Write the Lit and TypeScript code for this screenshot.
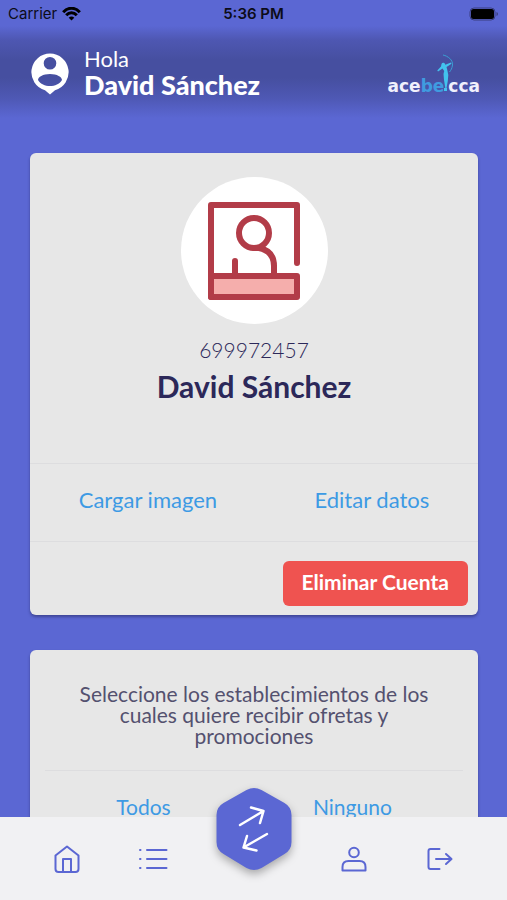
import { LitElement, html, css } from "lit";
import { customElement } from "lit/decorators.js";

@customElement("status-bar")
class StatusBar extends LitElement {
  static styles = css`
    :host {
      display: grid;
      grid-template-columns: 1fr auto 1fr;
      align-items: center;
      height: 28px;
      padding: 0 8px;
      color: #0c0c18;
      font: 15px/20px Inter, "Liberation Sans", sans-serif;
    }
    .carrier {
      display: flex;
      align-items: center;
      gap: 5px;
    }
    .time {
      font-weight: 600;
    }
    .battery {
      justify-self: end;
    }
    svg {
      display: block;
    }
  `;
  render() {
    return html`
      <div class="carrier">
        <span>Carrier</span>
        <svg width="19" height="14" viewBox="0 0 19 14" fill="none" stroke="#000" stroke-width="3">
          <path d="M1.2 5.2C6-.1 13-.1 17.8 5.2" />
          <path d="M4.2 8.3C7.3 5 11.7 5 14.8 8.3" />
          <path d="M9.5 13.6L6.7 10.7C8.3 9.2 10.7 9.2 12.3 10.7Z" fill="#000" stroke="none" />
        </svg>
      </div>
      <span class="time">5:36 PM</span>
      <svg class="battery" width="30" height="15" viewBox="0 0 30 15">
        <rect x="1" y="1" width="25" height="12" rx="4" fill="none" stroke="#3a3f80" />
        <rect x="2" y="2" width="23" height="10" rx="2.500" fill="#000" />
        <path d="M27.500 5v4c2-.8 2-3.200 0-4z" fill="#3a3f80" />
      </svg>
    `;
  }
}

@customElement("app-root")
class AppRoot extends LitElement {
  static styles = css`
    :host {
      display: flex;
      flex-direction: column;
      height: 100vh;
      overflow: hidden;
      background: #5b67d3;
      color: #2c2859;
      font-family: Lato, "Open Sans", sans-serif;
    }
    * {
      box-sizing: border-box;
    }
    svg {
      display: block;
    }
    h1,
    p {
      margin: 0;
    }
    button {
      border: 0;
      padding: 0;
      background: none;
      font: inherit;
      color: inherit;
      cursor: pointer;
    }
    .top {
      flex: none;
      background: linear-gradient(#5b67d3 26px, #4e57b2 40px, #464fa0 60px, #464fa0 78px, #4e58b4 98px, #5b67d3 118px);
    }
    .header {
      display: flex;
      align-items: center;
      height: 92px;
      padding: 0 27px 0 30px;
      color: #fff;
    }
    .greeting {
      display: flex;
      flex-direction: column;
      margin-left: 14px;
      padding-bottom: 3px;
      font-size: 22px;
      line-height: 24px;
    }
    .greeting strong {
      font-weight: 900;
      font-size: 27px;
      line-height: 27px;
    }
    .logo {
      display: flex;
      align-items: flex-end;
      margin-left: auto;
      font: bold 17px/18px "DejaVu Sans", sans-serif;
      color: #f0f0fc;
    }
    .logo .be {
      color: #3f9be0;
    }
    .archer {
      margin: 0 -10px 3px -8px;
    }
    .content {
      flex: 1;
      min-height: 0;
      overflow: hidden;
      display: flex;
      flex-direction: column;
      gap: 35px;
      padding: 33px 29px 0 30px;
    }
    .card {
      flex: none;
      border-radius: 6px;
      background: #e7e7e7;
      box-shadow: 0 2px 3px rgba(20, 20, 60, 0.4);
    }
    .profile {
      display: flex;
      flex-direction: column;
      align-items: center;
      height: 310px;
      padding-top: 24px;
    }
    .avatar {
      display: grid;
      place-items: center;
      width: 147px;
      height: 147px;
      border-radius: 50%;
      background: #fff;
    }
    .phone {
      margin-top: 14px;
      font-size: 21px;
      line-height: 24px;
      font-weight: 300;
    }
    .name {
      margin-top: 6px;
      font-size: 30px;
      line-height: 36px;
      font-weight: 700;
    }
    .actions {
      display: flex;
      justify-content: space-around;
      height: 78px;
      padding-bottom: 6px;
      border-top: 1px solid #dddddf;
      color: #3d9ae4;
      font-size: 22px;
      line-height: 24px;
    }
    .danger-row {
      display: flex;
      justify-content: flex-end;
      padding: 19px 10px 9px;
      border-top: 1px solid #dddddf;
    }
    .danger {
      height: 45px;
      padding: 0 19px 4px;
      border-radius: 6px;
      background: #ef5350;
      color: #fff;
      font-size: 21px;
      font-weight: 700;
    }
    .prompt {
      padding: 33px 48px 24px;
      text-align: center;
      font-size: 21px;
      line-height: 21px;
      color: #54516f;
    }
    .picks {
      margin: 0 15px;
      font-size: 21px;
    }
    .tabs {
      flex: none;
      display: grid;
      grid-template-columns: 1fr 1fr 116px 1fr 1fr;
      height: 83px;
      padding: 0 24px;
      background: #f1f1f3;
      color: #5b67d3;
    }
    .tabs button {
      display: grid;
      place-items: center;
    }
    .tabs .swap {
      position: relative;
      justify-self: center;
      align-self: start;
      margin-top: -30px;
      filter: drop-shadow(0 4px 4px rgba(0, 0, 0, 0.3));
    }
    .line {
      fill: none;
      stroke: currentColor;
      stroke-width: 2;
      stroke-linecap: round;
      stroke-linejoin: round;
    }
  `;

  render() {
    return html`
      <header class="top">
        <status-bar></status-bar>
        <div class="header">
          <svg width="40" height="44" viewBox="0 0 40 44">
            <path
              fill="#fff"
              fill-rule="evenodd"
              d="M20 1.500a18.700 18.700 0 0 1 5 36.700L20 42.500L15 38.200A18.700 18.700 0 0 1 20 1.500zM20 5a6.300 6.300 0 1 0 0 12.600A6.300 6.300 0 0 0 20 5zM20 22C13 22 8 25 8 28C10.500 32 15 34 20 34S29.500 32 32 28C32 25 27 22 20 22z"
            />
          </svg>
          <div class="greeting"><span>Hola</span><strong>David Sánchez</strong></div>
          <div class="logo">
            <span>ace</span><span class="be">be</span>
            <svg class="archer" width="22" height="38" viewBox="0 0 22 38">
              <path d="M5.500 10a2 2.200 0 0 1 3.800.8l5.700-2.300.5 1.200-5 3.300 1 4 .8 4-.5 6-1.300 7h-1.200L8 26l-.5-6 .7-3-1.700-2.500L2 17.500l-.7-1L5 12.500z" fill="#42c3ee" />
              <path d="M7 1c5 1 10 5 9.500 10-.5 3.500-1.500 5-3 7" fill="none" stroke="#3b9fd4" />
              <rect x="8" y="34" width="3" height="3" fill="#42c3ee" />
            </svg>
            <span>cca</span>
          </div>
        </div>
      </header>

      <main class="content">
        <section class="card">
          <div class="profile">
            <div class="avatar">
              <svg width="92" height="98" viewBox="0 0 92 98" fill="none" stroke="#b23c48" stroke-width="6" stroke-linecap="round" stroke-linejoin="round">
                <path d="M3 74h86v21H3z" fill="#f5aeac" />
                <path d="M3 95V3h86v58M27 59v14M46 46h5q15 3 15 18v9" />
                <circle cx="46" cy="31" r="15" />
              </svg>
            </div>
            <p class="phone">699972457</p>
            <h1 class="name">David Sánchez</h1>
          </div>
          <div class="actions">
            <button>Cargar imagen</button>
            <button>Editar datos</button>
          </div>
          <div class="danger-row">
            <button class="danger">Eliminar Cuenta</button>
          </div>
        </section>

        <section class="card">
          <p class="prompt">Seleccione los establecimientos de los cuales quiere recibir ofretas y promociones</p>
          <div class="actions picks">
            <button>Todos</button>
            <button>Ninguno</button>
          </div>
        </section>
      </main>

      <nav class="tabs">
        <button aria-label="Inicio">
          <svg class="line" width="26" height="28" viewBox="0 0 26 28">
            <path d="M1.500 10.500L13 1.500l11.500 9V24q0 3-3 3h-17q-3 0-3-3zM9 27V14h8v13" />
          </svg>
        </button>
        <button aria-label="Lista">
          <svg class="line" width="30" height="22" viewBox="0 0 30 22">
            <path d="M9 2h19.500M9 11h19.500M9 20h19.500M2 2h.5M2 11h.5M2 20h.5" />
          </svg>
        </button>
        <button class="swap" aria-label="Intercambiar">
          <svg width="76" height="84" viewBox="0 0 76 84">
            <path d="M30.500 3q7.500-4 15 0l23 13q7 4 7 12v27q0 8-7 12l-23 14q-7.500 4-15 0l-23-14q-7-4-7-12V28q0-8 7-12z" fill="#5b67d3" />
            <g fill="none" stroke="#fff" stroke-width="2.500" stroke-linecap="round" stroke-linejoin="round">
              <path d="M24 38L47.500 24M35 20.500L47.500 24L44 36" />
              <path d="M51 47L27.500 60.500M31 49L27.500 60.500L40.500 63.500" />
            </g>
          </svg>
        </button>
        <button aria-label="Perfil">
          <svg class="line" width="26" height="26" viewBox="0 0 26 26">
            <circle cx="13" cy="6.500" r="4.800" />
            <path d="M1.500 24.500V21q0-6 6-6h11q6 0 6 6v3.500z" />
          </svg>
        </button>
        <button aria-label="Salir">
          <svg class="line" width="26" height="24" viewBox="0 0 26 24">
            <path d="M12.500 2H3.500q-2 0-2 2v16q0 2 2 2h9M9 12h15M19 7l5.500 5-5.500 5" />
          </svg>
        </button>
      </nav>
    `;
  }
}
